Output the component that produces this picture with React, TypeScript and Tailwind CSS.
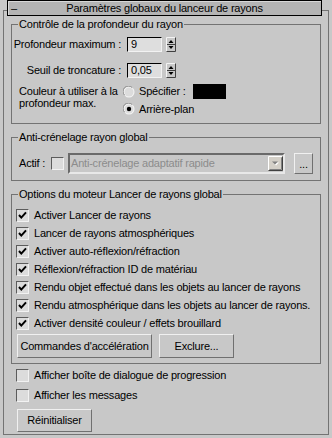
import React from "react";

function Check({ checked }: { checked: boolean }) {
  return (
    <div className="w-[13px] h-[13px] shrink-0 border border-t-[#5c5c5c] border-l-[#5c5c5c] border-b-[#f2f2f2] border-r-[#f2f2f2] bg-[#dcdcdc] flex items-center justify-center">
      {checked && (
        <svg width="11" height="11" viewBox="0 0 11 11">
          <path d="M2 5 L4.3 7.6 L9 2.4" fill="none" stroke="#000" strokeWidth="2" />
        </svg>
      )}
    </div>
  );
}

function Radio({ checked }: { checked: boolean }) {
  return (
    <svg width="12" height="12" viewBox="0 0 12 12" className="shrink-0">
      <circle cx="6" cy="6" r="5.5" fill="#f4f4f4" />
      <circle cx="6" cy="6" r="4.5" fill="#dcdcdc" />
      <path d="M1.6 9.2 A5 5 0 0 1 9.2 1.6" stroke="#8a8a8a" fill="none" strokeWidth="1" />
      {checked && <circle cx="6" cy="6" r="2.2" fill="#000" />}
    </svg>
  );
}

function Spinner() {
  return (
    <svg width="10" height="15" viewBox="0 0 10 15" className="shrink-0 ml-[4px]">
      <rect x="0" y="0" width="10" height="15" fill="#c8c8c8" />
      <path d="M0.5 14.5 V0.5 H9.5" stroke="#f4f4f4" fill="none" />
      <path d="M0.5 14.5 H9.5 V0.5" stroke="#404040" fill="none" />
      <path d="M1 7.5 H9" stroke="#404040" />
      <path d="M2.5 6 H7.5 L5 3 Z" fill="#000" />
      <path d="M2.5 9 H7.5 L5 12 Z" fill="#000" />
    </svg>
  );
}

function NumInput({ value }: { value: string }) {
  return (
    <div className="ml-[6px] w-[35px] h-[15px] shrink-0 border border-t-[#000] border-l-[#000] border-b-[#f2f2f2] border-r-[#f2f2f2] bg-[#dedede] pl-[3px] leading-[13px]">
      {value}
    </div>
  );
}

function Btn({ className, children }: { className?: string; children: React.ReactNode }) {
  return (
    <div
      className={`border border-t-[#f0f0f0] border-l-[#f0f0f0] border-b-[#707070] border-r-[#707070] flex items-center justify-center whitespace-nowrap shrink-0 ${className ?? ""}`}
    >
      {children}
    </div>
  );
}

function Group({
  title,
  className,
  children,
}: {
  title: string;
  className?: string;
  children?: React.ReactNode;
}) {
  return (
    <div className={`relative border border-[#737373] shrink-0 ${className ?? ""}`}>
      <span className="absolute -top-[8px] left-[6px] px-[1px] bg-[#c8c8c8] leading-[14px] whitespace-nowrap">
        {title}
      </span>
      {children}
    </div>
  );
}

function CheckRow({ checked, label, className }: { checked: boolean; label: string; className?: string }) {
  return (
    <div className={`flex items-center h-[18px] gap-[5px] ${className ?? ""}`}>
      <Check checked={checked} />
      <span className="whitespace-nowrap">{label}</span>
    </div>
  );
}

export default function App() {
  const opts = [
    "Activer Lancer de rayons",
    "Lancer de rayons atmosphériques",
    "Activer auto-réflexion/réfraction",
    "Réflexion/réfraction ID de matériau",
    "Rendu objet effectué dans les objets au lancer de rayons",
    "Rendu atmosphérique dans les objets au lancer de rayons.",
    "Activer densité couleur / effets brouillard",
  ];
  return (
    <div className="w-[332px] h-[438px] bg-[#c8c8c8] text-[11px] tracking-[-0.2px] text-black font-['Liberation_Sans',Arial,sans-serif] pt-[10px] pl-[3px] overflow-hidden">
      <div className="w-[326px] h-[425px] border border-[#737373] flex flex-col">
        {/* Header */}
        <div className="relative -mt-[11px] ml-[3px] w-[315px] h-[16px] shrink-0 border border-black bg-[#b4b4b4] shadow-[inset_1px_1px_0_#d8d8d8] flex items-center justify-center">
          <span className="absolute left-[3px] top-[-1px] leading-[16px]">–</span>
          <span className="leading-[14px] whitespace-nowrap">Paramètres globaux du lanceur de rayons</span>
        </div>

        {/* Group 1 */}
        <Group title="Contrôle de la profondeur du rayon" className="ml-[7px] mt-[8px] w-[310px] h-[100px]">
          <div className="flex items-center mt-[12px] h-[15px]">
            <span className="w-[109px] text-right whitespace-nowrap">Profondeur maximum :</span>
            <NumInput value="9" />
            <Spinner />
          </div>
          <div className="flex items-center mt-[11px] h-[15px]">
            <span className="w-[109px] text-right whitespace-nowrap">Seuil de troncature :</span>
            <NumInput value="0,05" />
            <Spinner />
          </div>
          <div className="flex mt-[6px]">
            <div className="w-[111px] pl-[7px] leading-[12px] pt-[1px]">
              <div className="whitespace-nowrap">Couleur à utiliser à la</div>
              <div className="whitespace-nowrap">profondeur max.</div>
            </div>
            <div className="flex flex-col gap-[3px]">
              <div className="flex items-center h-[15px] gap-[4px]">
                <Radio checked={false} />
                <span className="w-[50px] whitespace-nowrap">Spécifier :</span>
                <div className="w-[33px] h-[15px] bg-black" />
              </div>
              <div className="flex items-center h-[14px] gap-[4px]">
                <Radio checked={true} />
                <span className="whitespace-nowrap">Arrière-plan</span>
              </div>
            </div>
          </div>
        </Group>

        {/* Group 2 */}
        <Group title="Anti-crénelage rayon global" className="ml-[7px] mt-[13px] w-[310px] h-[44px]">
          <div className="flex items-center mt-[15px] h-[21px] pl-[7px]">
            <span className="w-[32px] whitespace-nowrap">Actif :</span>
            <Check checked={false} />
            <div className="ml-[4px] w-[217px] h-[21px] border-2 border-t-[#6a6a6a] border-l-[#6a6a6a] border-b-[#e8e8e8] border-r-[#e8e8e8] flex items-center">
              <span className="flex-1 pl-[1px] text-[#8c8c8c] whitespace-nowrap overflow-hidden">
                Anti-crénelage adaptatif rapide
              </span>
              <svg width="15" height="15" viewBox="0 0 15 15" className="shrink-0">
                <rect x="0" y="0" width="15" height="15" fill="#d4d0c8" />
                <path d="M0.5 14 V0.5 H14" stroke="#ffffff" fill="none" />
                <path d="M0.5 14.5 H14.5 V0.5" stroke="#404040" fill="none" />
                <path d="M1.5 13.5 H13.5 V1.5" stroke="#808080" fill="none" />
                <path d="M5 6.5 H11 L8 9.5 Z" fill="#ffffff" />
                <path d="M4 5.5 H10 L7 8.5 Z" fill="#808080" />
              </svg>
            </div>
            <Btn className="ml-[9px] w-[19px] h-[21px]">
              <span className="leading-[12px]">...</span>
            </Btn>
          </div>
        </Group>

        {/* Group 3 */}
        <Group title="Options du moteur Lancer de rayons global" className="ml-[7px] mt-[13px] w-[310px] h-[170px]">
          <div className="mt-[11px] pl-[4px] flex flex-col">
            {opts.map((o) => (
              <CheckRow key={o} checked={true} label={o} />
            ))}
          </div>
          <div className="flex mt-[2px] pl-[5px] gap-[7px]">
            <Btn className="w-[135px] h-[24px]">Commandes d'accélération</Btn>
            <Btn className="w-[75px] h-[24px]">Exclure...</Btn>
          </div>
        </Group>

        <div className="pl-[12px] flex flex-col">
          <CheckRow className="mt-[2px]" checked={false} label="Afficher boîte de dialogue de progression" />
          <CheckRow className="mt-[2px]" checked={false} label="Afficher les messages" />
        </div>
        <Btn className="ml-[13px] mt-[5px] w-[75px] h-[23px]">Réinitialiser</Btn>
      </div>
    </div>
  );
}
